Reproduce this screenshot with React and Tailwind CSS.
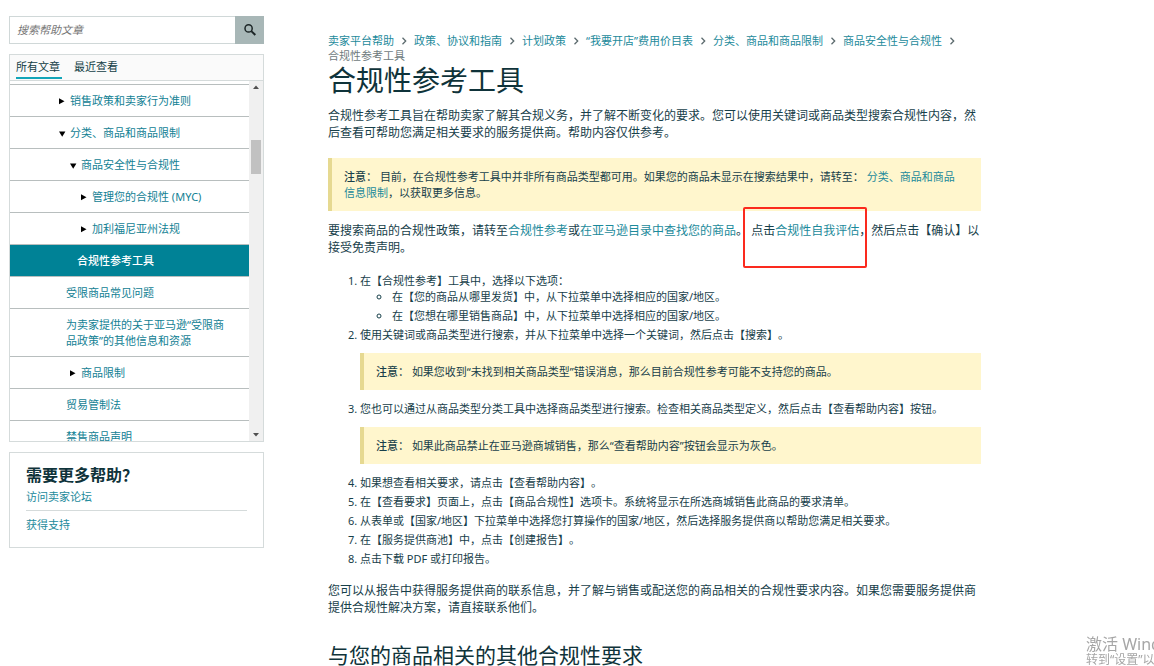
import clsx from 'clsx';

const articles = [
  { title: '销售政策和卖家行为准则', indent: 'pl-12', arrow: 'right' },
  { title: '分类、商品和商品限制', indent: 'pl-12', arrow: 'down' },
  { title: '商品安全性与合规性', indent: 'pl-[59px]', arrow: 'down' },
  { title: '管理您的合规性 (MYC)', indent: 'pl-[70px]', arrow: 'right' },
  { title: '加利福尼亚州法规', indent: 'pl-[70px]', arrow: 'right' },
  { title: '合规性参考工具', indent: 'pl-[67px]', active: true },
  { title: '受限商品常见问题', indent: 'pl-14' },
  { title: '为卖家提供的关于亚马逊“受限商品政策”的其他信息和资源', indent: 'pl-14' },
  { title: '商品限制', indent: 'pl-[59px]', arrow: 'right' },
  { title: '贸易管制法', indent: 'pl-14' },
  { title: '禁售商品声明', indent: 'pl-14' },
];

const breadcrumbs = [
  '卖家平台帮助',
  '政策、协议和指南',
  '计划政策',
  '“我要开店”费用价目表',
  '分类、商品和商品限制',
  '商品安全性与合规性',
];

const Arrow = ({ direction }) => (
  <svg viewBox="0 0 8 8" className="mt-1 mr-1 size-2 shrink-0 fill-black" aria-hidden="true">
    {direction === 'right' ? <path d="M1 1.2 6.5 4.2 1 7.2z" /> : <path d="M1 2.5h6.4L4.2 7.8z" />}
  </svg>
);

const Link = ({ children, className }) => (
  <a href="#" className={clsx('hover:underline', className || 'text-[#1c8a9b]')}>
    {children}
  </a>
);

const Note = ({ children, className }) => (
  <div
    className={clsx(
      'border-l-4 border-[#e6d991] bg-[#fff6cd] pt-[11px] pr-4 pb-[10px] pl-3 text-[11px] leading-4',
      className
    )}
  >
    <span className="font-medium">注意：</span> {children}
  </div>
);

const Step = ({ children }) => <li className="pb-[3px]">{children}</li>;

const SearchBox = () => (
  <form className="flex h-7" onSubmit={(e) => e.preventDefault()}>
    <input
      type="search"
      aria-label="搜索帮助文章"
      placeholder="搜索帮助文章"
      className="min-w-0 flex-1 border border-r-0 border-[#d0d8d8] bg-white px-[7px] text-[11px] italic outline-none placeholder:text-[#757575]"
    />
    <button
      type="submit"
      aria-label="搜索"
      className="flex w-[29px] items-center justify-center bg-[#a8b7b7] text-[#1c2526]"
    >
      <svg viewBox="0 0 12 12" className="size-3" fill="none" stroke="currentColor" aria-hidden="true">
        <circle cx="4.6" cy="4.4" r="3.6" strokeWidth="1.5" />
        <path d="M7.3 7.1 11.3 11" strokeWidth="2" />
      </svg>
    </button>
  </form>
);

const ArticleList = () => (
  <section className="mt-[10px] border border-[#d5dbdb]">
    <div className="flex h-[26px] gap-3 border-b border-[#d5dbdb] bg-[#fafafa] px-[6px] text-[11px] leading-6 text-[#123d45]">
      <button type="button" className="h-6 border-b-2 border-[#12a5b8] pr-[2px]">
        所有文章
      </button>
      <button type="button" className="h-6">
        最近查看
      </button>
    </div>
    <div className="flex h-[360px]">
      <ul className="min-w-0 flex-1 overflow-hidden text-[11px] leading-4">
        <li className="h-1 border-b border-[#b8bebe]" />
        {articles.map((article) => (
          <li
            key={article.title}
            className={clsx(
              'flex border-b border-[#b8bebe] pt-2 pr-5 pb-[7px]',
              article.indent,
              article.active && 'bg-[#008296]'
            )}
          >
            {article.arrow && <Arrow direction={article.arrow} />}
            <Link className={article.active ? 'font-medium text-white' : 'text-[#128194]'}>
              {article.title}
            </Link>
          </li>
        ))}
      </ul>
      <div className="flex w-[14px] flex-col items-center bg-[#f0f0f0] py-1" aria-hidden="true">
        <svg viewBox="0 0 6 4" className="h-1 w-[6px] fill-[#505050]">
          <path d="M0 4 3 0.5 6 4z" />
        </svg>
        <div className="mt-[51px] h-[34px] w-[10px] bg-[#c1c1c1]" />
        <svg viewBox="0 0 6 4" className="mt-auto h-1 w-[6px] fill-[#505050]">
          <path d="M0 0 3 3.5 6 0z" />
        </svg>
      </div>
    </div>
  </section>
);

const MoreHelp = () => (
  <section className="mt-[10px] border border-[#d5dbdb] px-4 pt-3 pb-[14px] text-[11px] leading-4">
    <h2 className="text-[16px] leading-5 font-bold text-[#0f333a]">需要更多帮助？</h2>
    <div className="border-b border-[#d5dbdb] pt-1 pb-[5px]">
      <Link>访问卖家论坛</Link>
    </div>
    <div className="pt-[6px]">
      <Link>获得支持</Link>
    </div>
  </section>
);

const App = () => {
  return (
    <div className='flex min-h-screen gap-16 bg-white pl-[9px] font-["Noto_Sans","Noto_Sans_CJK_SC",sans-serif] text-[#17404a] [text-spacing-trim:space-all]'>
      <aside className="w-[255px] shrink-0 pt-4">
        <SearchBox />
        <ArticleList />
        <MoreHelp />
      </aside>

      <main className="max-w-[653px] min-w-0 flex-1 pt-[33px] text-[12px] leading-[17px]">
        <nav className="flex flex-wrap text-[11px] leading-[15px]" aria-label="breadcrumb">
          {breadcrumbs.map((crumb) => (
            <span key={crumb} className="flex items-center">
              <Link>{crumb}</Link>
              <svg viewBox="0 0 8 8" className="mx-[6px] size-2" fill="none" stroke="#5c6b6e" aria-hidden="true">
                <path d="M2.5 0.8 5.7 4 2.5 7.2" strokeWidth="1.3" />
              </svg>
            </span>
          ))}
          <span className="text-[#6f7b7d]">合规性参考工具</span>
        </nav>

        <h1 className="text-[28px] leading-[34px] text-[#0f333a]">合规性参考工具</h1>

        <p className="mt-[10px]">
          合规性参考工具旨在帮助卖家了解其合规义务，并了解不断变化的要求。您可以使用关键词或商品类型搜索合规性内容，然后查看可帮助您满足相关要求的服务提供商。帮助内容仅供参考。
        </p>

        <Note className="mt-[17px]">
          目前，在合规性参考工具中并非所有商品类型都可用。如果您的商品未显示在搜索结果中，请转至：{' '}
          <Link>分类、商品和商品信息限制</Link>，以获取更多信息。
        </Note>

        <p className="mt-[11px]">
          要搜索商品的合规性政策，请转至<Link>合规性参考</Link>或<Link>在亚马逊目录中查找您的商品</Link>。{' '}
          <span className="relative">
            点击<Link>合规性自我评估</Link>
            <span className="pointer-events-none absolute -top-[15px] -right-2 -left-2 h-[61px] rounded-xs border-2 border-[#fb2a1e]" />
          </span>
          ，然后点击【确认】以接受免责声明。
        </p>

        <ol className="mt-[17px] list-decimal pl-8 text-[11px] leading-4">
          <Step>
            在【合规性参考】工具中，选择以下选项：
            <ul className="list-[circle] pl-8">
              <Step>在【您的商品从哪里发货】中，从下拉菜单中选择相应的国家/地区。</Step>
              <li>在【您想在哪里销售商品】中，从下拉菜单中选择相应的国家/地区。</li>
            </ul>
          </Step>
          <Step>
            使用关键词或商品类型进行搜索，并从下拉菜单中选择一个关键词，然后点击【搜索】。
            <Note className="mt-[10px] mb-2">
              如果您收到“未找到相关商品类型”错误消息，那么目前合规性参考可能不支持您的商品。
            </Note>
          </Step>
          <Step>
            您也可以通过从商品类型分类工具中选择商品类型进行搜索。检查相关商品类型定义，然后点击【查看帮助内容】按钮。
            <Note className="mt-[10px] mb-2">
              如果此商品禁止在亚马逊商城销售，那么“查看帮助内容”按钮会显示为灰色。
            </Note>
          </Step>
          <Step>如果想查看相关要求，请点击【查看帮助内容】。</Step>
          <Step>在【查看要求】页面上，点击【商品合规性】选项卡。系统将显示在所选商城销售此商品的要求清单。</Step>
          <Step>从表单或【国家/地区】下拉菜单中选择您打算操作的国家/地区，然后选择服务提供商以帮助您满足相关要求。</Step>
          <Step>在【服务提供商池】中，点击【创建报告】。</Step>
          <Step>点击下载 PDF 或打印报告。</Step>
        </ol>

        <p className="mt-3">
          您可以从报告中获得服务提供商的联系信息，并了解与销售或配送您的商品相关的合规性要求内容。如果您需要服务提供商提供合规性解决方案，请直接联系他们。
        </p>

        <h2 className="mt-[26px] text-[21px] leading-[26px] text-[#0f333a]">与您的商品相关的其他合规性要求</h2>
      </main>

      <div className="pointer-events-none fixed right-0 bottom-0 w-[68px] overflow-hidden whitespace-nowrap text-[#a6a6a6]">
        <div className="text-[16px] leading-5">激活 Windows</div>
        <div className="text-[12px] leading-3">转到“设置”以激活 Windows。</div>
      </div>
    </div>
  );
};

export default App;
